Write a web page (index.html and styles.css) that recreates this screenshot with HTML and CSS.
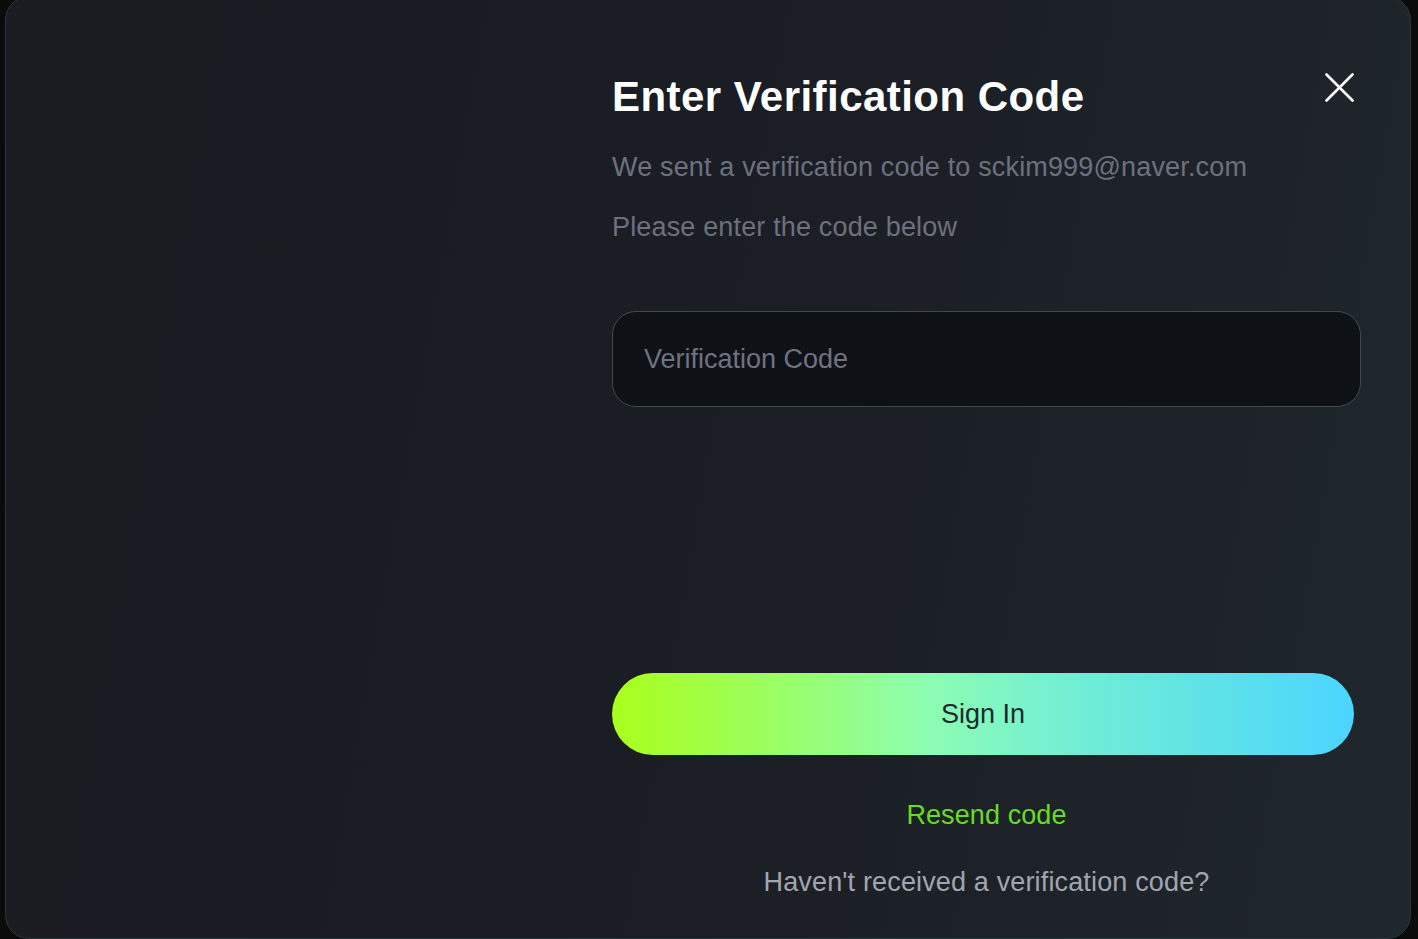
FILE: index.html
```html
<!DOCTYPE html>
<html lang="en">
<head>
<meta charset="utf-8">
<title>Enter Verification Code</title>
<link rel="stylesheet" href="styles.css">
</head>
<body>
<div class="modal">
  <div class="modal-side"></div>
  <div class="modal-main">
    <div class="modal-header">
      <h1 class="modal-title">Enter Verification Code</h1>
      <button class="close-btn" aria-label="Close">
        <svg width="29" height="29" viewBox="0 0 29 29" fill="none" stroke="#ffffff" stroke-width="2.6" stroke-linecap="round">
          <path d="M1.5 1.5 L27.5 27.5 M27.5 1.5 L1.5 27.5"/>
        </svg>
      </button>
    </div>
    <p class="subtitle subtitle-first">We sent a verification code to sckim999@naver.com</p>
    <p class="subtitle subtitle-second">Please enter the code below</p>
    <input class="code-input" type="text" placeholder="Verification Code">
    <button class="signin-btn">Sign In</button>
    <a class="resend-link">Resend code</a>
    <p class="help-text">Haven't received a verification code?</p>
  </div>
</div>
</body>
</html>
```

FILE: styles.css
```css
* { box-sizing: border-box; }

html, body {
  margin: 0;
  padding: 0;
  width: 1418px;
  height: 939px;
  overflow: hidden;
  background: #0b0b0c;
  font-family: "Liberation Sans", Arial, sans-serif;
}

.modal {
  margin: -4px 0 0 5px;
  width: 1406px;
  height: 943px;
  border: 1px solid #2a363c;
  border-radius: 24px;
  background: linear-gradient(100deg, #1a1c22 0%, #1a1d23 45%, #1d2329 80%, #1f262c 100%);
  display: flex;
}

.modal-side {
  width: 606px;
  flex: none;
}

.modal-main {
  width: 749px;
  flex: none;
  display: flex;
  flex-direction: column;
  padding-top: 75px;
}

.modal-header {
  display: flex;
  justify-content: space-between;
  align-items: flex-start;
}

.modal-title {
  margin: 0;
  font-size: 42px;
  line-height: 50px;
  font-weight: 700;
  color: #ffffff;
  letter-spacing: 0.45px;
}

.close-btn {
  margin: -5px 2px 0 0;
  width: 40px;
  height: 40px;
  padding: 0;
  border: 0;
  background: transparent;
  display: flex;
  align-items: center;
  justify-content: center;
  cursor: pointer;
}

.subtitle {
  margin: 0;
  font-size: 27px;
  line-height: 32px;
  color: #6d707d;
  letter-spacing: 0.16px;
}

.subtitle-first { margin-top: 29px; }
.subtitle-second { margin-top: 28px; }

.code-input {
  margin-top: 68px;
  width: 749px;
  height: 96px;
  border: 1.5px solid #3a4d4b;
  border-radius: 24px;
  background: #0e1116;
  padding: 0 0 0 31px;
  font-family: "Liberation Sans", Arial, sans-serif;
  font-size: 27px;
  color: #d0d2d8;
  outline: none;
}

.code-input::placeholder {
  color: #6f7280;
}

.signin-btn {
  margin-top: 266px;
  width: 742px;
  height: 82px;
  border: 0;
  border-radius: 41px;
  background: linear-gradient(90deg, #a9ff1c 0%, #9cfe5c 20%, #8dfdb0 42%, #72eed4 62%, #5fe2e6 80%, #4bd5ff 100%);
  font-family: "Liberation Sans", Arial, sans-serif;
  font-size: 27px;
  color: #1c2a2e;
  cursor: pointer;
}

.resend-link {
  margin-top: 45px;
  align-self: center;
  font-size: 27px;
  line-height: 31px;
  color: #68db24;
  letter-spacing: 0.1px;
  cursor: pointer;
}

.help-text {
  margin: 36px 0 0 0;
  text-align: center;
  font-size: 27px;
  line-height: 31px;
  color: #a2a5af;
  letter-spacing: 0.15px;
}
```
